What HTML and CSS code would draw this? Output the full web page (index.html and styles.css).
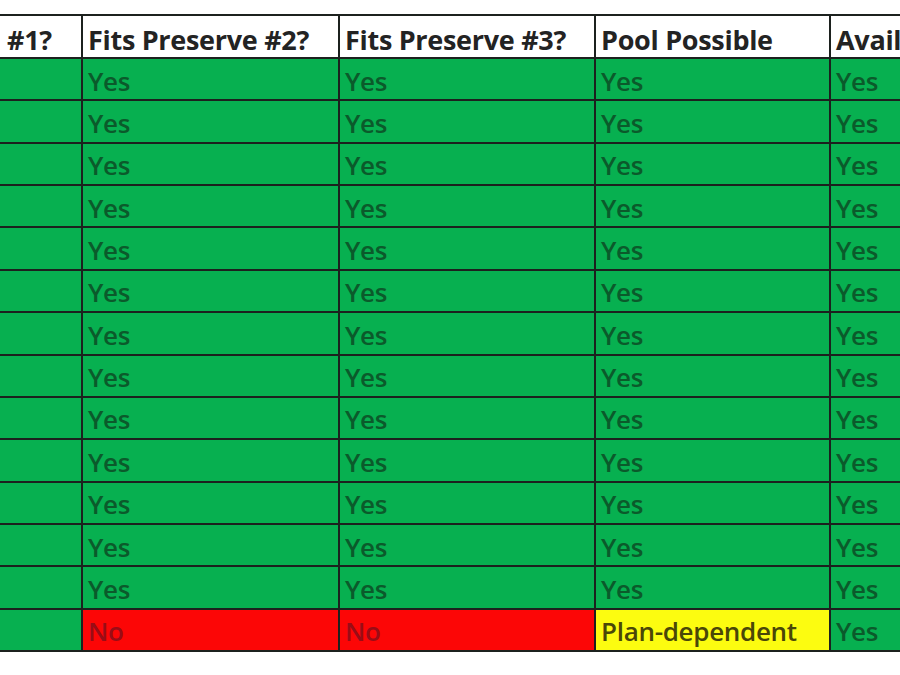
FILE: index.html
```html
<!DOCTYPE html>
<html>
<head>
<meta charset="utf-8">
<link rel="stylesheet" href="styles.css">
</head>
<body>
<div class="sheet">
  <div class="cell head first">#1?</div>
  <div class="cell head">Fits Preserve #2?</div>
  <div class="cell head">Fits Preserve #3?</div>
  <div class="cell head">Pool Possible</div>
  <div class="cell head">Available?</div>

  <div class="cell green"></div><div class="cell green">Yes</div><div class="cell green">Yes</div><div class="cell green">Yes</div><div class="cell green">Yes</div>
  <div class="cell green"></div><div class="cell green">Yes</div><div class="cell green">Yes</div><div class="cell green">Yes</div><div class="cell green">Yes</div>
  <div class="cell green"></div><div class="cell green">Yes</div><div class="cell green">Yes</div><div class="cell green">Yes</div><div class="cell green">Yes</div>
  <div class="cell green"></div><div class="cell green">Yes</div><div class="cell green">Yes</div><div class="cell green">Yes</div><div class="cell green">Yes</div>
  <div class="cell green"></div><div class="cell green">Yes</div><div class="cell green">Yes</div><div class="cell green">Yes</div><div class="cell green">Yes</div>
  <div class="cell green"></div><div class="cell green">Yes</div><div class="cell green">Yes</div><div class="cell green">Yes</div><div class="cell green">Yes</div>
  <div class="cell green"></div><div class="cell green">Yes</div><div class="cell green">Yes</div><div class="cell green">Yes</div><div class="cell green">Yes</div>
  <div class="cell green"></div><div class="cell green">Yes</div><div class="cell green">Yes</div><div class="cell green">Yes</div><div class="cell green">Yes</div>
  <div class="cell green"></div><div class="cell green">Yes</div><div class="cell green">Yes</div><div class="cell green">Yes</div><div class="cell green">Yes</div>
  <div class="cell green"></div><div class="cell green">Yes</div><div class="cell green">Yes</div><div class="cell green">Yes</div><div class="cell green">Yes</div>
  <div class="cell green"></div><div class="cell green">Yes</div><div class="cell green">Yes</div><div class="cell green">Yes</div><div class="cell green">Yes</div>
  <div class="cell green"></div><div class="cell green">Yes</div><div class="cell green">Yes</div><div class="cell green">Yes</div><div class="cell green">Yes</div>
  <div class="cell green"></div><div class="cell green">Yes</div><div class="cell green">Yes</div><div class="cell green">Yes</div><div class="cell green">Yes</div>
  <div class="cell green"></div><div class="cell red">No</div><div class="cell red">No</div><div class="cell yellow">Plan-dependent</div><div class="cell green">Yes</div>
</div>
</body>
</html>
```
FILE: styles.css
```css
html, body { margin: 0; padding: 0; background: #fff; overflow: hidden; width: 900px; height: 675px; }
body { font-family: "Open Sans", "Noto Sans", sans-serif; }
.sheet {
  margin-top: 14px;
  width: 1031px;
  display: grid;
  grid-template-columns: 81px 255px 254px 233px 200px;
  grid-template-rows: 41px repeat(14, 40.36px);
  gap: 2px;
  padding: 2px 0;
  background: #1c211e;
}
.cell {
  display: flex;
  align-items: flex-end;
  padding: 0 0 1px 5px;
  overflow: hidden;
  white-space: nowrap;
  font-size: 26px;
  font-weight: 600;
  line-height: 1.3;
  letter-spacing: -0.3px;
}
.head { background: #fff; color: #232323; font-weight: 700; font-size: 27px; padding-bottom: 0; padding-left: 5px; letter-spacing: -0.3px; }
.first { padding-left: 7px; }
.green { background: #07b050; color: #0b5a2b; }
.red { background: #fc0606; color: #9a0c16; }
.yellow { background: #fcfc10; color: #4a4708; }
```
